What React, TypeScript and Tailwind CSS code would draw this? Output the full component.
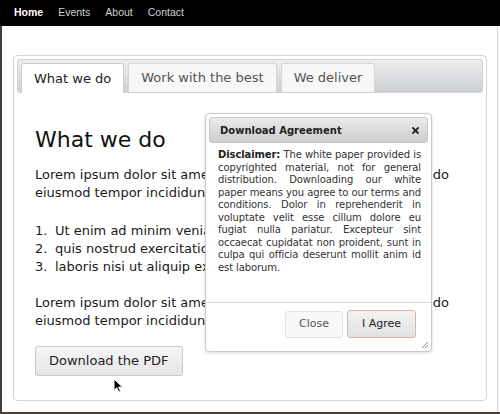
const LINES = [
  "copyrighted material, not for general",
  "distribution. Downloading our white",
  "paper means you agree to our terms and",
  "conditions. Dolor in reprehenderit in",
  "voluptate velit esse cillum dolore eu",
  "fugiat nulla pariatur. Excepteur sint",
  "occaecat cupidatat non proident, sunt in",
  "culpa qui officia deserunt mollit anim id",
];

const LIST = [
  "Ut enim ad minim veniam,",
  "quis nostrud exercitation ullamco",
  "laboris nisi ut aliquip ex ea commodo",
];

function Paragraph({ className = "" }: { className?: string }) {
  return (
    <p className={`whitespace-nowrap ${className}`}>
      Lorem ipsum dolor sit amet, consectetur adipisicing elit, sed do
      <br />
      eiusmod tempor incididunt ut labore et dolore magna aliqua.
    </p>
  );
}

function Dialog() {
  return (
    <div className="absolute left-[205px] top-[113px] w-[227px] h-[239px] bg-white border border-[#c9c9c9] rounded-[4px] p-[3px] flex flex-col shadow-[0_1px_3px_rgba(0,0,0,0.15)]">
      {/* Title bar */}
      <div className="h-[26px] shrink-0 rounded-[3px] border border-[#c6c6c6] bg-gradient-to-b from-[#ebebeb] to-[#cdcdcd] flex items-center justify-between pl-[10px] pr-[8px]">
        <span className="text-[10px] font-bold text-[#222]">Download Agreement</span>
        <svg width="7" height="7" viewBox="0 0 7 7">
          <path d="M1 1l5 5M6 1L1 6" stroke="#222" strokeWidth="1.8" strokeLinecap="square" />
        </svg>
      </div>

      {/* Body */}
      <div className="flex-1 pl-[9px] pt-[6px]">
        <div className="w-[203px] text-[10px] leading-[12.5px] tracking-[-0.1px] text-[#333]">
          <div className="whitespace-nowrap text-justify [text-align-last:justify]">
            <b className="text-[#222]">Disclaimer:</b> The white paper provided is
          </div>
          {LINES.map((l, i) => (
            <div key={i} className="whitespace-nowrap text-justify [text-align-last:justify]">
              {l}
            </div>
          ))}
          <div className="whitespace-nowrap">est laborum.</div>
        </div>
      </div>

      {/* Footer */}
      <div className="-mx-[3px] -mb-[3px] h-[49px] shrink-0 border-t border-[#d6d6d6] flex items-start justify-end gap-[4px] pt-[7px] pr-[15px]">
        <button className="mt-[1px] w-[58px] h-[27px] rounded-[3px] border border-[#e2e2e2] bg-[#f8f8f8] text-[11px] text-[#555]">
          Close
        </button>
        <button className="w-[69px] h-[28px] rounded-[3px] border border-[#d6b89c] bg-gradient-to-b from-[#f3f3f3] to-[#e1e1e1] text-[11px] text-[#222]">
          I Agree
        </button>
      </div>

      {/* Resize grip */}
      <svg className="absolute right-[2px] bottom-[2px]" width="8" height="8" viewBox="0 0 8 8">
        <path d="M7 1L1 7M7 4L4 7M7 6.5L6.5 7" stroke="#888" strokeWidth="1" />
      </svg>
    </div>
  );
}

export default function App() {
  return (
    <div className="relative w-[500px] h-[414px] bg-white overflow-hidden font-['DejaVu_Sans',sans-serif]">
      {/* Top navigation */}
      <nav className="h-[26px] bg-black flex items-center gap-[15px] pl-[14px] font-['Liberation_Sans',sans-serif] text-[10.5px]">
        <span className="font-bold text-white">Home</span>
        <span className="text-[#d0d0d0]">Events</span>
        <span className="text-[#d0d0d0]">About</span>
        <span className="text-[#d0d0d0]">Contact</span>
      </nav>

      <div className="h-[388px] border-l-2 border-l-[#3e3e46] border-b-2 border-b-[#4a4038] pt-[29px] pl-[11px]">
        <div className="w-[474px] h-[346px] rounded-[4px] border border-[#d4d4d4] p-[3px]">
          {/* Tab bar */}
          <div className="h-[34px] rounded-[3px] border border-[#d2d2d2] bg-gradient-to-b from-[#ededed] to-[#cdd0d4] flex items-end gap-[4px] pl-[3px]">
            <div className="h-[30px] -mb-[1px] px-[12px] flex items-center rounded-t-[3px] border border-b-0 border-[#cfcfcf] bg-white text-[13px] text-[#222]">
              What we do
            </div>
            <div className="h-[29px] px-[12px] flex items-center rounded-t-[3px] border border-b-0 border-[#d8d8d8] bg-[#f7f7f7] text-[13px] text-[#555]">
              Work with the best
            </div>
            <div className="h-[29px] px-[12px] flex items-center rounded-t-[3px] border border-b-0 border-[#d8d8d8] bg-[#f7f7f7] text-[13px] text-[#555]">
              We deliver
            </div>
          </div>

          {/* Panel */}
          <div className="pl-[18px] pt-[34px] text-[13px] leading-[18px] text-[#1a1a1a]">
            <h2 className="text-[22px] leading-[26px] font-normal text-[#111]">What we do</h2>
            <Paragraph className="mt-[13px]" />
            <ol className="mt-[20px]">
              {LIST.map((t, i) => (
                <li key={i} className="flex whitespace-nowrap">
                  <span className="w-[20px]">{i + 1}.</span>
                  <span>{t}</span>
                </li>
              ))}
            </ol>
            <Paragraph className="mt-[18px]" />
            <button className="mt-[16px] h-[30px] px-[13px] rounded-[3px] border border-[#c9c9c9] bg-gradient-to-b from-[#f6f6f6] to-[#e6e6e6] text-[13px] text-[#222]">
              Download the PDF
            </button>
          </div>
        </div>
      </div>

      {/* Right frame line */}
      <div className="absolute left-[497px] top-[26px] w-px h-[386px] bg-[#d6d6d6]" />

      <Dialog />

      {/* Mouse cursor */}
      <svg className="absolute left-[113px] top-[378px]" width="10" height="15" viewBox="0 0 10 15">
        <path d="M1 1v11.5l2.8-2.7 2 4.3 1.8-.8-2-4.2H9.5z" fill="#000" stroke="#fff" strokeWidth="1" />
      </svg>
    </div>
  );
}
